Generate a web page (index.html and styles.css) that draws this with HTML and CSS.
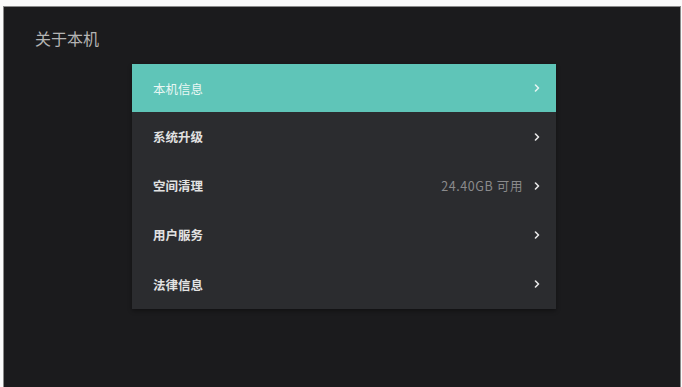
FILE: index.html
```html
<!DOCTYPE html>
<html lang="zh-CN">
<head>
  <meta charset="UTF-8">
  <meta name="viewport" content="width=device-width, initial-scale=1.0">
  <title>关于本机</title>
  <link rel="stylesheet" href="styles.css">
</head>
<body>
  <div class="screen">
    <h2 class="page-title">关于本机</h2>

    <div class="menu">
      <div class="menu-row active">
        <span class="row-label">本机信息</span>
        <svg class="chevron" width="6" height="8" viewBox="0 0 6 8"><polyline points="1.5,1 4.5,4 1.5,7" /></svg>
      </div>
      <div class="menu-row">
        <span class="row-label">系统升级</span>
        <svg class="chevron" width="6" height="8" viewBox="0 0 6 8"><polyline points="1.5,1 4.5,4 1.5,7" /></svg>
      </div>
      <div class="menu-row">
        <span class="row-label">空间清理</span>
        <span class="row-value">24.40GB 可用</span>
        <svg class="chevron" width="6" height="8" viewBox="0 0 6 8"><polyline points="1.5,1 4.5,4 1.5,7" /></svg>
      </div>
      <div class="menu-row">
        <span class="row-label">用户服务</span>
        <svg class="chevron" width="6" height="8" viewBox="0 0 6 8"><polyline points="1.5,1 4.5,4 1.5,7" /></svg>
      </div>
      <div class="menu-row">
        <span class="row-label">法律信息</span>
        <svg class="chevron" width="6" height="8" viewBox="0 0 6 8"><polyline points="1.5,1 4.5,4 1.5,7" /></svg>
      </div>
    </div>
  </div>
</body>
</html>
```

FILE: styles.css
```css
html, body {
  margin: 0;
  padding: 0;
  background-color: #fafafa;
  height: 100%;
  overflow: hidden;
}
body {
  font-family: "Noto Sans CJK SC", "Noto Sans", sans-serif;
}
.screen {
  margin: 6px 1px 0 3px;
  height: 381px;
  background-color: #1b1b1d;
  border: 1px solid #8a8a8a;
  border-bottom: none;
  display: flex;
  flex-direction: column;
}
.page-title {
  margin: 0;
  padding: 20px 0 0 31px;
  font-size: 16px;
  line-height: 22px;
  font-weight: 400;
  color: #b4b4b4;
}
.menu {
  width: 424px;
  margin: 15px 0 0 128px;
  background-color: #2b2c2f;
  box-shadow: 0 2px 4px rgba(0, 0, 0, 0.35);
}
.menu-row {
  height: 49px;
  display: flex;
  align-items: center;
  padding: 0 16px 0 21px;
}
.menu-row:last-child {
  height: 50px;
}
.row-label {
  flex: 1;
  font-size: 12.5px;
  font-weight: 700;
  color: #e2e2e2;
}
.row-value {
  font-size: 12.5px;
  letter-spacing: 0.6px;
  color: #8a8a8c;
  margin-right: 11px;
}
.chevron polyline {
  fill: none;
  stroke: #e8e8e8;
  stroke-width: 1.6;
  stroke-linecap: round;
  stroke-linejoin: round;
}
.menu-row.active {
  background-color: #5fc5b8;
  height: 48px;
}
.menu-row.active .row-label {
  font-weight: 400;
  color: #e9f7f4;
}
.menu-row.active .chevron polyline {
  stroke: #e4f5f2;
}
```
